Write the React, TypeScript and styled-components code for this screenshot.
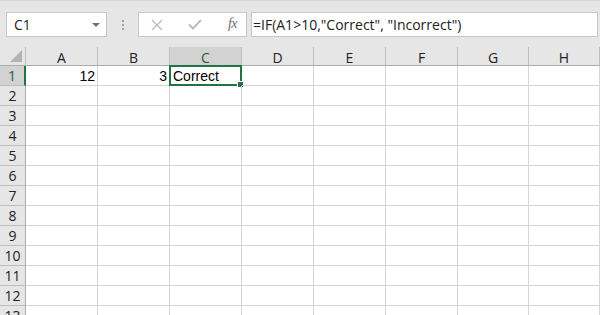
import React from 'react';
import styled, { createGlobalStyle } from 'styled-components';

const GlobalStyle = createGlobalStyle`
  html, body {
    margin: 0;
    padding: 0;
    background: #ffffff;
  }
  body {
    width: 600px;
    height: 315px;
    overflow: hidden;
  }
`;

const Wrapper = styled.div`
  width: 600px;
  height: 315px;
  overflow: hidden;
  background: #ffffff;
`;

const Toolbar = styled.div`
  height: 47px;
  box-sizing: border-box;
  padding: 11px 2px 0 6px;
  background: #e6e6e6;
  border-top: 1px solid #d6d6d6;
  display: flex;
  align-items: flex-start;
`;

const BoxBase = styled.div`
  height: 25px;
  box-sizing: border-box;
  background: #ffffff;
  border: 1px solid #c6c6c6;
  display: flex;
  align-items: center;
`;

const NameBox = styled(BoxBase)`
  width: 101px;
  padding: 0 6px 0 7px;
  justify-content: space-between;
  font-family: 'Open Sans', 'Liberation Sans', sans-serif;
  font-size: 14px;
  color: #222222;
`;

const Caret = styled.span`
  width: 0;
  height: 0;
  border-left: 4px solid transparent;
  border-right: 4px solid transparent;
  border-top: 4px solid #707070;
`;

const Grip = styled.div`
  width: 31px;
  height: 25px;
  display: flex;
  flex-direction: column;
  align-items: center;
  justify-content: center;
  gap: 2px;

  & > span {
    width: 2px;
    height: 2px;
    background: #a0a0a0;
  }
`;

const FxBox = styled(BoxBase)`
  width: 109px;
  padding: 0 9px 0 12px;
  justify-content: space-between;
`;

const FxLabel = styled.span`
  font-family: 'Liberation Serif', serif;
  font-style: italic;
  font-size: 14px;
  color: #6e6e6e;
  letter-spacing: -0.5px;
  margin-top: -1px;
`;

const FormulaInput = styled(BoxBase)`
  flex: 1;
  margin-left: 4px;
  padding-left: 1px;
  font-family: 'Open Sans', 'Liberation Sans', sans-serif;
  font-size: 14px;
  color: #222222;
  white-space: nowrap;
`;

const Sheet = styled.div`
  display: grid;
  grid-template-columns: 26px 72px 72px 72px 72px 72px 72px 71px 71px;
  grid-template-rows: 19px;
  grid-auto-rows: 20px;
`;

const Corner = styled.div`
  position: relative;
  background: #e6e6e6;
  border-right: 1px solid #bdbdbd;
  border-bottom: 1px solid #ababab;
  box-sizing: border-box;

  &::after {
    content: '';
    position: absolute;
    right: 3px;
    bottom: 3px;
    width: 0;
    height: 0;
    border-left: 12px solid transparent;
    border-bottom: 12px solid #b4b4b4;
  }
`;

const ColHead = styled.div<{ $active?: boolean }>`
  box-sizing: border-box;
  background: ${p => (p.$active ? '#d2d2d2' : '#e6e6e6')};
  border-right: 1px solid #bdbdbd;
  border-bottom: 1px solid #ababab;
  display: flex;
  align-items: center;
  justify-content: center;
  padding-top: 2px;
  font-family: 'Open Sans', 'Liberation Sans', sans-serif;
  font-size: 14px;
  color: ${p => (p.$active ? '#1e5c3a' : '#222222')};
`;

const RowHead = styled.div<{ $active?: boolean }>`
  box-sizing: border-box;
  background: ${p => (p.$active ? '#d2d2d2' : '#e6e6e6')};
  border-right: ${p => (p.$active ? '2px solid #217346' : '1px solid #ababab')};
  border-bottom: 1px solid #bdbdbd;
  display: flex;
  align-items: center;
  justify-content: center;
  font-family: 'Open Sans', 'Liberation Sans', sans-serif;
  font-size: 14px;
  color: ${p => (p.$active ? '#1e5c3a' : '#222222')};
`;

const Cell = styled.div<{ $align?: 'left' | 'right' }>`
  position: relative;
  box-sizing: border-box;
  border-right: 1px solid #d4d4d4;
  border-bottom: 1px solid #d4d4d4;
  display: flex;
  align-items: center;
  justify-content: ${p => (p.$align === 'right' ? 'flex-end' : 'flex-start')};
  padding: 1px 2px 0 3px;
  font-family: 'Liberation Sans', Arial, sans-serif;
  font-size: 14px;
  color: #000000;
  white-space: nowrap;
`;

const Selection = styled.div`
  position: absolute;
  left: -1px;
  top: -1px;
  right: -1px;
  bottom: -1px;
  border: 2px solid #217346;
  pointer-events: none;

  &::after {
    content: '';
    position: absolute;
    right: -4px;
    bottom: -4px;
    width: 5px;
    height: 5px;
    background: #217346;
    border: 1px solid #ffffff;
  }
`;

const XIcon = () => (
  <svg width="12" height="12" viewBox="0 0 12 12">
    <path d="M1 1 L11 11 M11 1 L1 11" stroke="#bcbcbc" strokeWidth="1.4" fill="none" />
  </svg>
);

const CheckIcon = () => (
  <svg width="14" height="11" viewBox="0 0 14 11">
    <path d="M1 5.5 L5 9.5 L13 1" stroke="#bcbcbc" strokeWidth="2" fill="none" />
  </svg>
);

const columns = ['A', 'B', 'C', 'D', 'E', 'F', 'G', 'H'];
const rows = Array.from({ length: 13 }, (_, i) => i + 1);

const values: Record<string, { text: string; align: 'left' | 'right' }> = {
  A1: { text: '12', align: 'right' },
  B1: { text: '3', align: 'right' },
  C1: { text: 'Correct', align: 'left' },
};

const App = () => {
  return (
    <Wrapper>
      <GlobalStyle />
      <Toolbar>
        <NameBox>
          <span>C1</span>
          <Caret />
        </NameBox>
        <Grip>
          <span />
          <span />
          <span />
        </Grip>
        <FxBox>
          <XIcon />
          <CheckIcon />
          <FxLabel>fx</FxLabel>
        </FxBox>
        <FormulaInput>=IF(A1&gt;10,"Correct", "Incorrect")</FormulaInput>
      </Toolbar>

      <Sheet>
        <Corner />
        {columns.map(c => (
          <ColHead key={c} $active={c === 'C'}>{c}</ColHead>
        ))}
        {rows.map(r => (
          <React.Fragment key={r}>
            <RowHead $active={r === 1}>{r}</RowHead>
            {columns.map(c => {
              const id = `${c}${r}`;
              const v = values[id];
              return (
                <Cell key={id} $align={v?.align}>
                  {v?.text}
                  {id === 'C1' && <Selection />}
                </Cell>
              );
            })}
          </React.Fragment>
        ))}
      </Sheet>
    </Wrapper>
  );
};

export default App;
